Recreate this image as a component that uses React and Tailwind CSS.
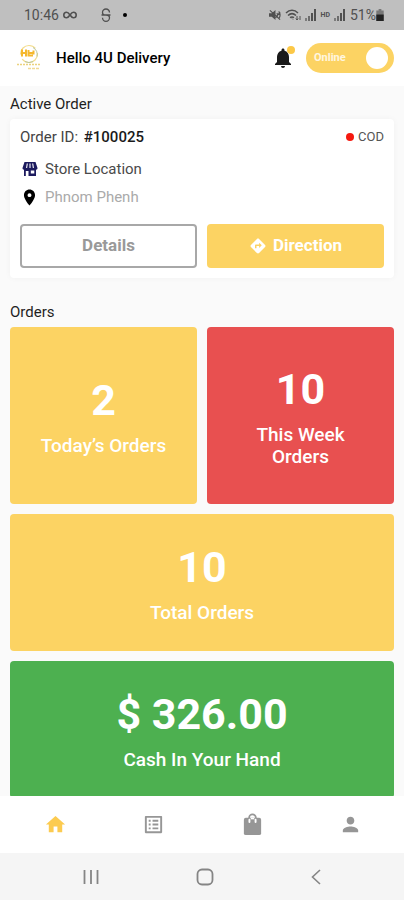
import { useState } from 'react'
import {
  MdDirections,
  MdHome,
  MdListAlt,
  MdLocationOn,
  MdNotifications,
  MdPerson,
} from 'react-icons/md'

function BagIcon({ size }) {
  return (
    <svg viewBox="0 0 24 24" width={size} height={size} aria-hidden="true">
      <path d="M8.500 6V5a3.500 3.500 0 0 1 7 0v1" fill="none" stroke="currentColor" strokeWidth="1.800" />
      <path d="M5 5h14a2 2 0 0 1 2 2v14a2 2 0 0 1-2 2H5a2 2 0 0 1-2-2V7a2 2 0 0 1 2-2z" fill="currentColor" />
      <path d="M8.800 7v2.500M15.200 7v2.500" stroke="#fff" strokeWidth="2" strokeLinecap="round" />
      <path d="M10.200 5.800h3.600" stroke="#fff" strokeWidth="1.600" />
    </svg>
  )
}

const navItems = [
  { href: '#home',    label: 'Home',    icon: MdHome },
  { href: '#orders',  label: 'Orders',  icon: MdListAlt },
  { href: '#bag',     label: 'Bag',     icon: BagIcon },
  { href: '#profile', label: 'Profile', icon: MdPerson },
]

function Signal() {
  return (
    <svg viewBox="0 0 12 12" className="w-3 h-3" fill="currentColor" aria-hidden="true">
      <path d="M0 9h2v3H0z" opacity=".6" />
      <path d="M3 7h2v5H3z" opacity=".75" />
      <path d="M6 4h2v8H6zM9 0h2v12H9z" />
    </svg>
  )
}

function StatusBar() {
  return (
    <div className="flex items-center h-[30px] pl-6 pr-5 bg-[#bfbfbf] text-[#505050] text-sm flex-shrink-0">
      <span>10:46</span>
      <svg viewBox="0 0 14 8" className="w-3.5 h-2 ml-1" fill="none" stroke="currentColor" strokeWidth="1.6" aria-hidden="true">
        <path d="M7 4C5.6 2 4.900 1.200 3.600 1.200a2.800 2.800 0 0 0 0 5.600C4.900 6.800 5.600 6 7 4s2.100-2.800 3.400-2.800a2.800 2.800 0 0 1 0 5.600C9.100 6.800 8.400 6 7 4z" />
      </svg>
      <svg viewBox="0 0 10 14" className="w-2.5 h-3.5 ml-6" fill="none" stroke="currentColor" strokeWidth="1.3" aria-hidden="true">
        <path d="M8.500 4.500a3.500 3.500 0 0 0-7 0C1.500 6.500 3 7 5 7s3.500.8 3.500 2.800a3.500 3.500 0 0 1-7 0M.5 7h9" />
      </svg>
      <span className="w-1 h-1 ml-3 rounded-full bg-black" />

      <div className="flex items-center gap-1 ml-auto">
        <svg viewBox="0 0 13 12" className="w-3 h-3" aria-hidden="true">
          <path d="M0 4h3l4-3.500v11L3 8H0z" fill="currentColor" />
          <path d="M1 1l11 10M8.500 4c1 1 1 3 0 4M10.500 2c2 2 2 6 0 8M12 3L7 9" fill="none" stroke="currentColor" strokeWidth="1.300" />
        </svg>
        <svg viewBox="0 0 16 12" className="w-4 h-3" fill="none" stroke="currentColor" strokeWidth="1.500" aria-hidden="true">
          <path d="M1 4c3.500-3.600 8.500-3.600 12 0M3 6.500c2.500-2.300 5.500-2.300 8 0M5 8.700c1.300-1 2.700-1 4 0" />
          <path d="M7 9.500l1 1M12 7v4M10.800 9.500L12 11l1.200-1.500M15 11V7" strokeWidth="1" />
        </svg>
        <Signal />
        <span className="text-[7px] font-bold">HD</span>
        <Signal />
        <div className="flex items-center">
          <span>51%</span>
          <svg viewBox="0 0 8 13" className="w-2 h-3" aria-hidden="true">
            <path d="M2.500 0h3v1.500H8V13H0V1.500h2.500z" fill="#777" />
            <path d="M0 6h8v7H0z" fill="#222" />
          </svg>
        </div>
      </div>
    </div>
  )
}

function Logo() {
  return (
    <svg viewBox="0 0 26 28" className="w-[26px] h-7" aria-hidden="true">
      <circle cx="13" cy="10" r="8.500" fill="none" stroke="#f3dc8c" strokeWidth="1.200" strokeDasharray="21 5" />
      <path d="M17 3.500a8.500 8.500 0 0 1 4 9M9 17.500a8.500 8.500 0 0 0 8 0" fill="none" stroke="#b9c7a0" strokeWidth="1" />
      <path d="M6 5.500v7M10 5.500v7M6 9h4M12.500 6v5.500h4.500M12.500 9h4M17.500 6.500v4" fill="none" stroke="#f5b82e" strokeWidth="2" />
      <path d="M1 20.500h23" stroke="#ecd27e" strokeWidth="1.600" strokeDasharray="2 1" />
      <path d="M12 24.500h12" stroke="#f1d995" strokeWidth="1.400" strokeDasharray="3 1" />
    </svg>
  )
}

function StoreIcon() {
  return (
    <svg viewBox="0 0 16 16" className="w-4 h-4" aria-hidden="true">
      <path d="M2.500 1h11L15.500 7c0 1-.5 1.600-1.500 1.800V15H2V8.800C1 8.600.5 8 .5 7z" fill="#1c1a5e" />
      <path d="M5.300 2.500L4.600 7M8 2.500V7M10.700 2.500l.7 4.500" stroke="#fff" strokeWidth="1.100" />
      <path d="M3.800 10h2.700v5H3.800zM8.800 9.500h3.500v3H8.800z" fill="#fff" />
    </svg>
  )
}

function OnlineSwitch() {
  const [online, setOnline] = useState(true)

  return (
    <label className="relative flex items-center w-[88px] h-[30px] px-2 rounded-full bg-[#d1d5db] has-checked:bg-[#fcd363] cursor-pointer">
      <input
        type="checkbox"
        role="switch"
        checked={online}
        onChange={e => setOnline(e.target.checked)}
        className="peer absolute inset-0 opacity-0 cursor-pointer"
      />
      <span className="text-[11px] font-bold text-white/80">{online ? 'Online' : 'Offline'}</span>
      <span className="w-[22px] h-[22px] ml-auto -mr-0.5 rounded-full bg-white" />
    </label>
  )
}

function StatCard({ value, label, className }) {
  return (
    <div className={`flex flex-col items-center justify-center gap-2.5 px-6 rounded text-white text-center ${className}`}>
      <p className="text-[43px] leading-[50px] font-bold">{value}</p>
      <p className="text-[19px] leading-[22px] font-medium">{label}</p>
    </div>
  )
}

export default function App() {
  return (
    <div className="flex flex-col h-screen bg-[#fafafa] font-[Roboto,sans-serif] text-[#1f1f1f]">
      <StatusBar />

      {/* Header */}
      <header className="flex items-center h-14 pl-4 pr-2.5 bg-white flex-shrink-0">
        <Logo />
        <h1 className="ml-3.5 text-[15px] font-medium text-black">Hello 4U Delivery</h1>
        <button aria-label="Notifications" className="relative ml-auto mr-[11px]">
          <MdNotifications size={24} className="text-[#1a1a1a]" />
          <span className="absolute top-0 right-0 w-2 h-2 rounded-full bg-[#fcc847]" />
        </button>
        <OnlineSwitch />
      </header>

      <main className="flex-1 min-h-0 px-2.5 pt-2 overflow-y-auto [scrollbar-width:none]">
        {/* Active order */}
        <h2 className="mb-[5px] text-[15px] leading-5">Active Order</h2>
        <section className="p-2.5 pt-2 rounded bg-white shadow-[0_0_6px_rgba(0,0,0,0.04)]">
          <div className="flex items-center justify-between leading-5">
            <p className="text-[15px] text-[#444]">
              Order ID: <span className="ml-0.5 font-medium text-[#1a1a1a]">#100025</span>
            </p>
            <p className="flex items-center gap-1 text-[13px] text-[#555]">
              <span className="w-2 h-2 rounded-full bg-[#f5190f]" />
              COD
            </p>
          </div>
          <div className="flex items-center gap-[7px] mt-3 pl-0.5 text-[15px] leading-5 text-[#4a4a4a]">
            <StoreIcon />
            Store Location
          </div>
          <div className="flex items-center gap-1.5 mt-2 text-[15px] leading-5 text-[#aaa]">
            <MdLocationOn size={19} className="text-black" />
            Phnom Phenh
          </div>
          <div className="grid grid-cols-2 gap-2.5 mt-[17px]">
            <button className="h-11 rounded border-2 border-[#a8a8a8] text-[17px] font-bold text-[#999]">
              Details
            </button>
            <button className="flex items-center justify-center gap-1.5 h-11 rounded bg-[#fcd363] text-[17px] font-bold text-white">
              <MdDirections size={18} />
              Direction
            </button>
          </div>
        </section>

        {/* Order counts */}
        <h2 className="mt-6 mb-[5px] text-[15px] leading-5">Orders</h2>
        <div className="grid grid-cols-2 gap-2.5">
          <StatCard value="2" label="Today’s Orders" className="h-[177px] bg-[#fcd363]" />
          <StatCard value="10" label="This Week Orders" className="h-[177px] bg-[#e85050]" />
          <StatCard value="10" label="Total Orders" className="col-span-2 h-[137px] bg-[#fcd363]" />
          <StatCard value="$ 326.00" label="Cash In Your Hand" className="col-span-2 h-[137px] bg-[#4db050]" />
        </div>
      </main>

      {/* Tabs */}
      <nav className="grid grid-cols-4 h-[57px] pl-1.5 pr-1 bg-white flex-shrink-0">
        {navItems.map(({ href, label, icon: Icon }, i) => (
          <a
            key={href}
            href={href}
            aria-label={label}
            className={`flex items-center justify-center ${i === 0 ? 'text-[#fccb50]' : 'text-[#969696]'}`}
          >
            <Icon size={23} />
          </a>
        ))}
      </nav>

      {/* System buttons */}
      <div className="flex items-center justify-around h-[47px] px-[34px] bg-[#f5f5f5] text-[#858585] flex-shrink-0">
        <button aria-label="Recent apps">
          <svg viewBox="0 0 16 16" className="w-4 h-4" stroke="currentColor" strokeWidth="1.800">
            <path d="M1.500 1v14M8 1v14M14.500 1v14" />
          </svg>
        </button>
        <button aria-label="Home screen">
          <svg viewBox="0 0 18 18" className="w-[18px] h-[18px]" fill="none" stroke="currentColor" strokeWidth="1.800">
            <rect x="1.500" y="1.500" width="15" height="15" rx="4.500" />
          </svg>
        </button>
        <button aria-label="Back">
          <svg viewBox="0 0 10 16" className="w-2.5 h-4" fill="none" stroke="currentColor" strokeWidth="1.600">
            <path d="M9 1L1.500 8 9 15" />
          </svg>
        </button>
      </div>
    </div>
  )
}
